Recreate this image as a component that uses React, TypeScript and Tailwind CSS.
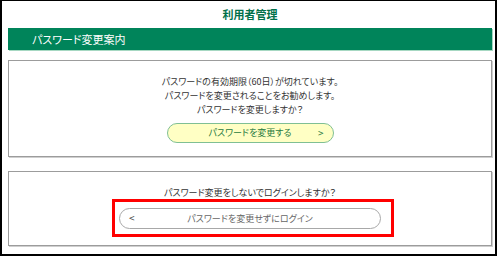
export default function App() {
  const jp = { fontFamily: '"Noto Sans CJK JP", "Noto Sans", sans-serif' };
  return (
    <div className="w-[500px] h-[256px] bg-white" style={jp}>
      <div className="relative w-[497px] h-[256px] border-t border-x-2 border-b-2 border-black pl-[6px] pr-[3px]">
        <h1 className="h-[27px] flex items-center justify-center text-[11px] font-bold text-[#00704a] [font-feature-settings:'palt']">
          利用者管理
        </h1>
        <div className="h-[22px] bg-[#00845a] shadow-[1px_1px_0_#a6d8c2] flex items-center pl-[24px] text-[11px] text-white [font-feature-settings:'palt']">
          パスワード変更案内
        </div>

        <section className="mt-[10px] h-[97px] border border-[#9c9c9c] shadow-[1px_1px_0_#cfcfcf] flex flex-col items-center pt-[14px] text-[9px] leading-[14px] text-[#333] [font-feature-settings:'palt']">
          <p>パスワードの有効期限（60日）が切れています。</p>
          <p>パスワードを変更されることをお勧めします。</p>
          <p>パスワードを変更しますか？</p>
          <button className="mt-[6px] relative w-[167px] h-[20px] rounded-full border border-[#7fbf94] bg-[#ffffc4] text-[9px] text-[#1f7a3f] flex items-center justify-center">
            パスワードを変更する
            <span className="absolute right-[9px] top-[2px] text-[10px]">&gt;</span>
          </button>
        </section>

        <section className="relative mt-[14px] h-[75px] border border-[#9c9c9c] shadow-[1px_1px_0_#cfcfcf] flex flex-col items-center pt-[14px] text-[9px] leading-[14px] text-[#333] [font-feature-settings:'palt']">
          <p>パスワード変更をしないでログインしますか？</p>
          <button className="mt-[8px] relative w-[262px] h-[21px] rounded-full border border-[#a8a8a8] bg-white text-[9px] text-[#666] flex items-center justify-center">
            パスワードを変更せずにログイン
            <span className="absolute left-[9px] top-[2px] text-[10px] text-[#444]">&lt;</span>
          </button>
          <div className="absolute left-[103px] top-[27px] w-[282px] h-[38px] border-[3px] border-[#ff0000]" />
        </section>
      </div>
    </div>
  );
}
